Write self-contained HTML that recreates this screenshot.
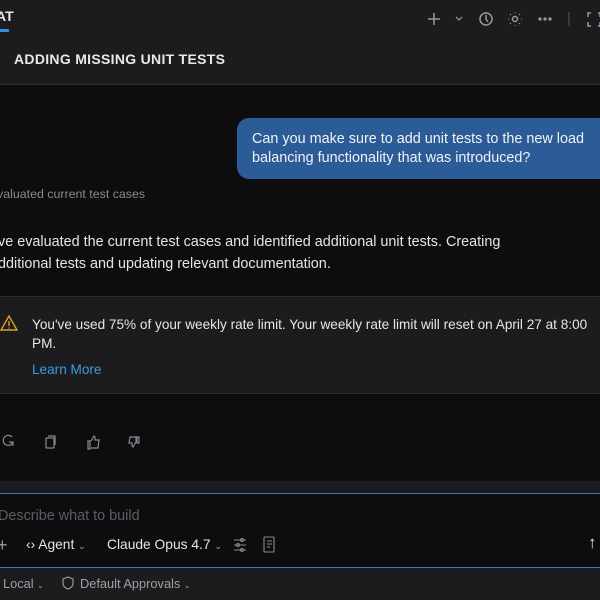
<!DOCTYPE html>
<html><head><style>
*{margin:0;padding:0;box-sizing:border-box}
body{width:600px;height:600px;overflow:hidden;background:#0d0d10;font-family:"Liberation Sans",sans-serif;color:#e6e6e6;position:relative}
.a{position:absolute;white-space:nowrap}
</style></head><body>
<div class="a" style="left:0;top:0;width:600px;height:85px;background:#1c1c1f;border-bottom:1px solid #2e2e32"></div>
<div class="a" style="left:-4px;top:8px;font-size:14px;font-weight:bold;color:#e8e8e8">AT</div>
<div class="a" style="left:0;top:29px;width:9px;height:3px;background:#3a8ed6"></div>
<svg class="a" style="left:420px;top:8px" width="180" height="22" fill="none" stroke="#9a9a9e" stroke-width="1.5">
<path d="M14 5v12M8 11h12"/><path d="M36 9l3 3 3-3" stroke-width="1.2"/>
<circle cx="66" cy="11" r="6"/><path d="M66 7v4l2 3"/>
<circle cx="95" cy="11" r="2.5"/><path d="M95 4v1M95 17v1M88 11h1M101 11h1M90 6l1 1M99 15l1 1M90 16l1-1M99 7l1-1" stroke-width="1"/>
<circle cx="120" cy="11" r=".9" fill="#9a9a9e"/><circle cx="125" cy="11" r=".9" fill="#9a9a9e"/><circle cx="130" cy="11" r=".9" fill="#9a9a9e"/>
<path d="M149 4v14" stroke="#444"/>
<path d="M171 5h-3v4M171 18h-3v-4M178 5h2v4M178 18h2v-4"/>
</svg>
<div class="a" style="left:14px;top:51px;font-size:14px;font-weight:bold;letter-spacing:.3px;color:#e8e8e8">ADDING MISSING UNIT TESTS</div>
<div class="a" style="left:237px;top:118px;width:380px;height:61px;background:#2b5c98;border-radius:12px"></div>
<div class="a" style="left:252px;top:130px;font-size:14.4px;line-height:19px;color:#f2f2f2">Can you make sure to add unit tests to the new load<br>balancing functionality that was introduced?</div>
<div class="a" style="left:-3px;top:187px;font-size:12.4px;color:#8a8a8e">valuated current test cases</div>
<div class="a" style="left:-2px;top:231px;font-size:14.4px;line-height:22px;color:#e6e6e6">ve evaluated the current test cases and identified additional unit tests. Creating<br>dditional tests and updating relevant documentation.</div>
<div class="a" style="left:0;top:296px;width:600px;height:98px;background:#1c1c1f;border-top:1px solid #2e2e32;border-bottom:1px solid #2e2e32"></div>
<svg class="a" style="left:0;top:314px" width="18" height="18" fill="none" stroke="#e0a020" stroke-width="1.4"><path d="M9 2L1 16h16z"/><path d="M9 7v5M9 13.5v1"/></svg>
<div class="a" style="left:32px;top:315px;font-size:13.6px;line-height:19px;color:#e6e6e6">You've used 75% of your weekly rate limit. Your weekly rate limit will reset on April 27 at 8:00<br>PM.</div>
<div class="a" style="left:32px;top:362px;font-size:13.6px;color:#3a9ae6">Learn More</div>
<svg class="a" style="left:0;top:432px" width="150" height="20" fill="none" stroke="#8a8a8e" stroke-width="1.2">
<path d="M12 5a5 5 0 1 0 1 5M9 10h4v4"/>
<rect x="46" y="6" width="8" height="10" rx="1"/><path d="M48 4h7v9"/>
<path d="M88 9h2v8h-2zM91 9l3-5 1 1v3h4l-1 8h-7"/>
<path d="M130 5h6v5l-3 5-1-1v-3h-3zM137 5h2v6h-2z"/>
</svg>
<div class="a" style="left:0;top:481px;width:600px;height:12px;background:#1c1c1f"></div>
<div class="a" style="left:0;top:493px;width:600px;height:1px;background:#2a7fc4"></div>
<div class="a" style="left:-2px;top:508px;font-size:14.4px;color:#5e5e62">Describe what to build</div>
<div class="a" style="left:-3px;top:535px;font-size:18px;color:#9a9a9e">+</div>
<div class="a" style="left:26px;top:537px;font-size:13.8px;color:#e6e6e6">&lsaquo;&rsaquo; Agent <span style="font-size:9px;color:#aaa">&#8964;</span></div>
<div class="a" style="left:107px;top:537px;font-size:13.8px;color:#e6e6e6">Claude Opus 4.7 <span style="font-size:9px;color:#aaa">&#8964;</span></div>
<svg class="a" style="left:232px;top:535px" width="50" height="20" fill="none" stroke="#8a8a8e" stroke-width="1.1">
<path d="M2 5h12M2 10h12M2 15h12"/><circle cx="10" cy="5" r="1.5"/><circle cx="6" cy="10" r="1.5"/><circle cx="10" cy="15" r="1.5"/>
<rect x="32" y="2" width="10" height="15" rx="1"/><path d="M35 6h5M35 9h5M35 12h3"/>
</svg>
<div class="a" style="left:588px;top:533px;font-size:17px;color:#e6e6e6">↑</div>
<div class="a" style="left:0;top:567px;width:600px;height:1px;background:#2a7fc4"></div>
<div class="a" style="left:0;top:568px;width:600px;height:32px;background:#1c1c1f"></div>
<div class="a" style="left:3px;top:576px;font-size:12.8px;color:#a0a0a4">Local <span style="font-size:8px">&#8964;</span></div>
<svg class="a" style="left:60px;top:575px" width="16" height="16" fill="none" stroke="#a0a0a4" stroke-width="1.1"><path d="M8 2l5 2v4c0 3-2 5-5 6-3-1-5-3-5-6V4z"/></svg>
<div class="a" style="left:80px;top:576px;font-size:12.8px;color:#a0a0a4">Default Approvals <span style="font-size:8px">&#8964;</span></div>
</body></html>
